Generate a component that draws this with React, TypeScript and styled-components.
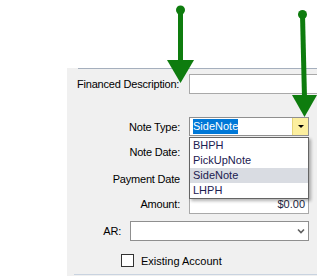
import React from "react";
import styled, { createGlobalStyle } from "styled-components";

const GlobalStyle = createGlobalStyle`
  html, body {
    margin: 0;
    padding: 0;
    background: #ffffff;
  }
  body {
    font-family: "Liberation Sans", Arial, sans-serif;
    font-size: 11px;
    color: #000000;
  }
`;

const Page = styled.div`
  position: relative;
  width: 322px;
  height: 276px;
  overflow: hidden;
`;

const Panel = styled.div`
  position: relative;
  margin: 68px 0 0 67px;
  width: 250px;
  height: 208px;
  overflow: hidden;
  background:
    linear-gradient(#a5afbd, #a5afbd) 11px 0 / calc(100% - 11px) 1px no-repeat,
    linear-gradient(#c9d3e0, #c9d3e0) 7px 206px / calc(100% - 7px) 1px no-repeat,
    #f0f0f0;
`;

const Form = styled.div`
  display: flex;
  flex-direction: column;
  padding-top: 6px;
`;

const Row = styled.div<{ $top: number; $height: number; $labelWidth?: number }>`
  display: grid;
  grid-template-columns: ${(p) => p.$labelWidth ?? 122}px auto;
  align-items: center;
  margin-top: ${(p) => p.$top}px;
  height: ${(p) => p.$height}px;
`;

const Label = styled.label<{ $align?: "left" | "right" }>`
  text-align: ${(p) => p.$align ?? "right"};
  padding: ${(p) => (p.$align === "left" ? "0 0 0 10px" : "0 9px 0 0")};
  letter-spacing: -0.2px;
  white-space: nowrap;
`;

const TextBox = styled.div<{ $width: number; $right?: boolean }>`
  box-sizing: border-box;
  width: ${(p) => p.$width}px;
  height: 100%;
  background: #ffffff;
  border: 1px solid #a9a9a9;
  display: flex;
  align-items: center;
  justify-content: ${(p) => (p.$right ? "flex-end" : "flex-start")};
  padding: 0 3px;
  color: #1b1f3f;
`;

const Combo = styled.div<{ $width: number }>`
  box-sizing: border-box;
  width: ${(p) => p.$width}px;
  height: 100%;
  background: #ffffff;
  border: 1px solid #8f8f8f;
  display: flex;
  align-items: stretch;
`;

const ComboText = styled.div`
  flex: 1;
  display: flex;
  align-items: center;
  padding-left: 3px;
`;

const Selected = styled.span`
  background: #0078d7;
  color: #ffffff;
  padding: 1px 0;
  line-height: 13px;
`;

const DropButton = styled.div<{ $hot?: boolean }>`
  width: 15px;
  display: flex;
  align-items: center;
  justify-content: center;
  background: ${(p) => (p.$hot ? "#fcef9f" : "transparent")};
  border-left: ${(p) => (p.$hot ? "1px solid #e6d57a" : "none")};
`;

const Caret = styled.div`
  width: 0;
  height: 0;
  border-left: 3px solid transparent;
  border-right: 3px solid transparent;
  border-top: 3px solid #000000;
`;

const DropList = styled.ul`
  position: absolute;
  left: 122px;
  top: 69px;
  width: 120px;
  box-sizing: border-box;
  margin: 0;
  padding: 0;
  list-style: none;
  background: #ffffff;
  border: 1px solid #646464;
  box-shadow: 2px 2px 3px rgba(0, 0, 0, 0.3);
  z-index: 2;
`;

const DropItem = styled.li<{ $active?: boolean }>`
  height: 15px;
  line-height: 15px;
  padding-left: 3px;
  color: #1b2050;
  background: ${(p) => (p.$active ? "#d9dce2" : "transparent")};
`;

const CheckRow = styled.div`
  display: flex;
  align-items: center;
  gap: 7px;
  margin-top: 13px;
  margin-left: 54px;
  height: 13px;
`;

const CheckBox = styled.div`
  box-sizing: border-box;
  width: 13px;
  height: 13px;
  background: #ffffff;
  border: 1px solid #333333;
`;

const Overlay = styled.svg`
  position: absolute;
  left: 0;
  top: 0;
  pointer-events: none;
  z-index: 5;
`;

const Arrows: React.FC = () => (
  <Overlay width={322} height={276} viewBox="0 0 322 276">
    <g fill="#0e7c0e" stroke="#0e7c0e">
      <circle cx={180.5} cy={10} r={4.5} stroke="none" />
      <line x1={180.5} y1={10} x2={180.5} y2={64} strokeWidth={5} />
      <polygon points="167,60 194,60 180.5,83" stroke="none" />
      <circle cx={302.5} cy={14.5} r={4.5} stroke="none" />
      <line x1={302.5} y1={14.5} x2={304.5} y2={98} strokeWidth={5} />
      <polygon points="292,95 317,95 304.5,117" stroke="none" />
    </g>
  </Overlay>
);

const noteTypes = ["BHPH", "PickUpNote", "SideNote", "LHPH"];

const App: React.FC = () => {
  const selected = "SideNote";

  return (
    <Page>
      <GlobalStyle />
      <Panel>
        <Form>
          <Row $top={0} $height={20}>
            <Label $align="left">Financed Description:</Label>
            <TextBox $width={130} />
          </Row>
          <Row $top={23} $height={19}>
            <Label>Note Type:</Label>
            <Combo $width={120}>
              <ComboText>
                <Selected>{selected}</Selected>
              </ComboText>
              <DropButton $hot>
                <Caret />
              </DropButton>
            </Combo>
          </Row>
          <Row $top={6} $height={20}>
            <Label>Note Date:</Label>
            <TextBox $width={120} />
          </Row>
          <Row $top={7} $height={20}>
            <Label>Payment Date</Label>
            <TextBox $width={120} />
          </Row>
          <Row $top={5} $height={20}>
            <Label>Amount:</Label>
            <TextBox $width={120} $right>
              $0.00
            </TextBox>
          </Row>
          <Row $top={7} $height={20} $labelWidth={63}>
            <Label>AR:</Label>
            <Combo $width={179}>
              <ComboText />
              <DropButton>
                <svg width="8" height="6" viewBox="0 0 8 6">
                  <path
                    d="M1 1.5 L4 4.5 L7 1.5"
                    fill="none"
                    stroke="#5f5f5f"
                    strokeWidth="1.6"
                  />
                </svg>
              </DropButton>
            </Combo>
          </Row>
          <CheckRow>
            <CheckBox />
            <span>Existing Account</span>
          </CheckRow>
        </Form>
        <DropList>
          {noteTypes.map((type) => (
            <DropItem key={type} $active={type === selected}>
              {type}
            </DropItem>
          ))}
        </DropList>
      </Panel>
      <Arrows />
    </Page>
  );
};

export default App;
